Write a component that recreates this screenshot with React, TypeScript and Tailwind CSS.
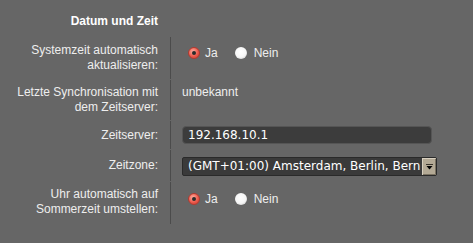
import React from 'react';

const labelFont = { fontFamily: '"Liberation Sans", Arial, sans-serif' };

function Radio({ checked }: { checked: boolean }) {
  // drawn radio dot, red when selected, soft white otherwise
  if (checked) {
    return (
      <span className="flex h-[12px] w-[12px] shrink-0 items-center justify-center rounded-full border border-[#b23a30] bg-[radial-gradient(circle_at_40%_35%,#ffb0a2,#ec5a4c_55%,#c63d31)]">
        <span className="h-[4px] w-[4px] rounded-full bg-[#2b2b2b]" />
      </span>
    );
  }
  return (
    <span className="block h-[12px] w-[12px] shrink-0 rounded-full bg-[radial-gradient(circle_at_45%_40%,#ffffff,#f6f6f6_55%,#d4d4d4_80%,#8f8f8f)]" />
  );
}

function YesNo({ value }: { value: boolean }) {
  return (
    <div className="flex h-[15px] items-center text-[12px] text-[#eeeeee]" style={labelFont}>
      <span className="ml-[17px] flex">
        <Radio checked={value} />
      </span>
      <span className="ml-[5px] pt-px">Ja</span>
      <span className="ml-[17px] flex">
        <Radio checked={!value} />
      </span>
      <span className="ml-[7px] pt-px">Nein</span>
    </div>
  );
}

function Row({
  label,
  children,
  labelClass,
  valueClass,
}: {
  label: React.ReactNode;
  children: React.ReactNode;
  labelClass: string;
  valueClass: string;
}) {
  return (
    <div className="flex">
      <div
        className={`w-[170px] shrink-0 pr-3 text-right text-[12px] leading-[15px] text-[#eeeeee] ${labelClass}`}
        style={labelFont}
      >
        {label}
      </div>
      <div className={`flex-1 border-l border-[#4b4b4b] ${valueClass}`}>{children}</div>
    </div>
  );
}

export default function App() {
  return (
    <div className="min-h-screen w-full bg-[#666666] pt-[14px]">
      {/* section title */}
      <div
        className="mb-[8px] w-[170px] pr-3 text-right text-[12px] font-bold leading-[15px] text-white"
        style={labelFont}
      >
        Datum und Zeit
      </div>

      <div className="flex flex-col gap-px">
        <Row
          label={
            <>
              Systemzeit automatisch
              <br />
              aktualisieren:
            </>
          }
          labelClass="py-[6px]"
          valueClass="pt-[8px]"
        >
          <YesNo value={true} />
        </Row>

        <Row
          label={
            <>
              Letzte Synchronisation mit
              <br />
              dem Zeitserver:
            </>
          }
          labelClass="py-[5px]"
          valueClass="pt-[5px]"
        >
          <div className="pl-[11px] text-[12px] leading-[15px] text-[#eeeeee]" style={labelFont}>
            unbekannt
          </div>
        </Row>

        <Row label="Zeitserver:" labelClass="pt-[7px]" valueClass="py-[5px]">
          <div
            className="ml-[11px] flex h-[18px] w-[250px] items-center rounded-[4px] border border-[#555555] bg-[#3c3c3c] pl-[5px] text-[12px] text-white"
            style={{ fontFamily: '"DejaVu Sans", sans-serif' }}
          >
            192.168.10.1
          </div>
        </Row>

        <Row label="Zeitzone:" labelClass="pt-[8px]" valueClass="pt-[7px] pb-[5px]">
          <div className="ml-[11px] flex h-[19px] w-[255px] overflow-hidden rounded-[2px] border border-[#2a2a2a] bg-[#3a3a3a]">
            <div
              className="flex-1 overflow-hidden whitespace-nowrap pl-[5px] text-[12px] leading-[17px] text-white"
              style={{ fontFamily: '"DejaVu Sans", sans-serif' }}
            >
              (GMT+01:00) Amsterdam, Berlin, Bern
            </div>
            <div className="flex w-[15px] shrink-0 items-center justify-center border-l border-[#3a3a3a] bg-[#b3a995] shadow-[inset_1px_1px_0_#d8d0c0,inset_-1px_-1px_0_#7a7262]">
              <svg width="7" height="6" viewBox="0 0 7 6">
                <rect x="0" y="0" width="7" height="1" fill="#3a352c" />
                <path d="M0.5 2 L6.5 2 L3.5 5.5 Z" fill="#000" />
              </svg>
            </div>
          </div>
        </Row>

        <Row
          label={
            <>
              Uhr automatisch auf
              <br />
              Sommerzeit umstellen:
            </>
          }
          labelClass="pt-[5px] pb-[7px]"
          valueClass="pt-[9px]"
        >
          <YesNo value={true} />
        </Row>
      </div>
    </div>
  );
}
